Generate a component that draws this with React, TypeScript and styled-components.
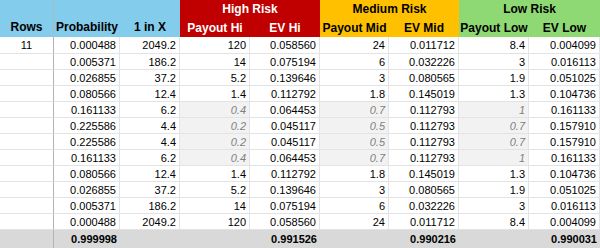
import styled, { createGlobalStyle } from "styled-components";

const GlobalStyle = createGlobalStyle`
  html, body {
    margin: 0;
    padding: 0;
    background: #ffffff;
  }
  body {
    font-family: "Liberation Sans", Arial, sans-serif;
  }
`;

type Row = {
  rows?: string;
  prob: string;
  oneIn: string;
  payHi: string;
  evHi: string;
  payMid: string;
  evMid: string;
  payLow: string;
  evLow: string;
  muted?: boolean;
};

const a: Row = { prob: "0.000488", oneIn: "2049.2", payHi: "120", evHi: "0.058560", payMid: "24", evMid: "0.011712", payLow: "8.4", evLow: "0.004099" };
const b: Row = { prob: "0.005371", oneIn: "186.2", payHi: "14", evHi: "0.075194", payMid: "6", evMid: "0.032226", payLow: "3", evLow: "0.016113" };
const c: Row = { prob: "0.026855", oneIn: "37.2", payHi: "5.2", evHi: "0.139646", payMid: "3", evMid: "0.080565", payLow: "1.9", evLow: "0.051025" };
const d: Row = { prob: "0.080566", oneIn: "12.4", payHi: "1.4", evHi: "0.112792", payMid: "1.8", evMid: "0.145019", payLow: "1.3", evLow: "0.104736" };
const e: Row = { prob: "0.161133", oneIn: "6.2", payHi: "0.4", evHi: "0.064453", payMid: "0.7", evMid: "0.112793", payLow: "1", evLow: "0.161133", muted: true };
const f: Row = { prob: "0.225586", oneIn: "4.4", payHi: "0.2", evHi: "0.045117", payMid: "0.5", evMid: "0.112793", payLow: "0.7", evLow: "0.157910", muted: true };

const rows: Row[] = [{ ...a, rows: "11" }, b, c, d, e, f, f, e, d, c, b, a];

const COLS = "54px 66px 60px 70px 70px 69px 70px 70px 71px";

const Sheet = styled.div`
  width: 600px;
  height: 248px;
  overflow: hidden;
  display: flex;
  flex-direction: column;
`;

const Header = styled.div`
  display: grid;
  grid-template-columns: ${COLS};
  grid-template-rows: 18px 19px;
  font-size: 12px;
  font-weight: 700;
`;

const HeadCell = styled.div<{ $bg: string; $fg?: string; $col: string; $row: string; $line?: boolean }>`
  grid-column: ${(p) => p.$col};
  grid-row: ${(p) => p.$row};
  background: ${(p) => p.$bg};
  color: ${(p) => p.$fg ?? "#000000"};
  display: flex;
  align-items: center;
  justify-content: center;
  white-space: nowrap;
  border-right: ${(p) => (p.$line ? "1px solid #a9bcc6" : "none")};
`;

const TallHead = styled(HeadCell)`
  align-items: flex-end;
  padding-bottom: 3px;
`;

const DataRow = styled.div<{ $first?: boolean }>`
  display: grid;
  grid-template-columns: ${COLS};
  height: ${(p) => (p.$first ? 17 : 16)}px;
  font-size: 11px;
`;

const Cell = styled.div<{ $muted?: boolean; $center?: boolean; $line?: boolean }>`
  box-sizing: border-box;
  display: flex;
  align-items: center;
  justify-content: ${(p) => (p.$center ? "center" : "flex-end")};
  padding-right: ${(p) => (p.$center ? 0 : 3)}px;
  border-bottom: 1px solid #e3e3e3;
  border-right: 1px solid ${(p) => (p.$line ? "#b4b4b4" : "#e3e3e3")};
  background: ${(p) => (p.$muted ? "#f2f2f2" : "#ffffff")};
  color: ${(p) => (p.$muted ? "#7f7f7f" : "#000000")};
  font-style: ${(p) => (p.$muted ? "italic" : "normal")};
  white-space: nowrap;
`;

const TotalRow = styled.div`
  flex: 1;
  display: grid;
  grid-template-columns: ${COLS};
  background: #d9d9d9;
  font-size: 11px;
  font-weight: 700;
`;

const TotalCell = styled.div<{ $line?: boolean }>`
  display: flex;
  align-items: center;
  justify-content: flex-end;
  padding-right: 3px;
  border-right: ${(p) => (p.$line ? "1px solid #b4b4b4" : "none")};
`;

const BLUE = "#83cceb";
const RED = "#c00000";
const ORANGE = "#ffc000";
const GREEN = "#8ed973";

export default function App() {
  return (
    <Sheet>
      <GlobalStyle />
      <Header>
        <TallHead $bg={BLUE} $col="1" $row="1 / 3" $line>Rows</TallHead>
        <TallHead $bg={BLUE} $col="2" $row="1 / 3">Probability</TallHead>
        <TallHead $bg={BLUE} $col="3" $row="1 / 3">1 in X</TallHead>
        <HeadCell $bg={RED} $fg="#ffffff" $col="4 / 6" $row="1">High Risk</HeadCell>
        <HeadCell $bg={ORANGE} $col="6 / 8" $row="1">Medium Risk</HeadCell>
        <HeadCell $bg={GREEN} $col="8 / 10" $row="1">Low Risk</HeadCell>
        <HeadCell $bg={RED} $fg="#ffffff" $col="4" $row="2">Payout Hi</HeadCell>
        <HeadCell $bg={RED} $fg="#ffffff" $col="5" $row="2">EV Hi</HeadCell>
        <HeadCell $bg={ORANGE} $col="6" $row="2">Payout Mid</HeadCell>
        <HeadCell $bg={ORANGE} $col="7" $row="2">EV Mid</HeadCell>
        <HeadCell $bg={GREEN} $col="8" $row="2">Payout Low</HeadCell>
        <HeadCell $bg={GREEN} $col="9" $row="2">EV Low</HeadCell>
      </Header>

      {rows.map((r, i) => (
        <DataRow key={i} $first={i === 0}>
          <Cell $center $line>{r.rows ?? ""}</Cell>
          <Cell>{r.prob}</Cell>
          <Cell>{r.oneIn}</Cell>
          <Cell $muted={r.muted}>{r.payHi}</Cell>
          <Cell>{r.evHi}</Cell>
          <Cell $muted={r.muted}>{r.payMid}</Cell>
          <Cell>{r.evMid}</Cell>
          <Cell $muted={r.muted}>{r.payLow}</Cell>
          <Cell>{r.evLow}</Cell>
        </DataRow>
      ))}

      <TotalRow>
        <TotalCell $line />
        <TotalCell>0.999998</TotalCell>
        <TotalCell />
        <TotalCell />
        <TotalCell>0.991526</TotalCell>
        <TotalCell />
        <TotalCell>0.990216</TotalCell>
        <TotalCell />
        <TotalCell>0.990031</TotalCell>
      </TotalRow>
    </Sheet>
  );
}
